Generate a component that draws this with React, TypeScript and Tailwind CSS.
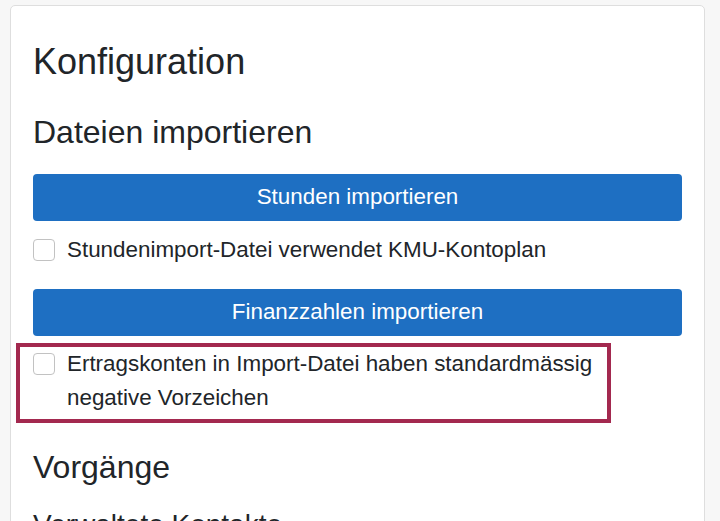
import React from 'react';

const CheckRow: React.FC<{ label: string }> = ({ label }) => (
  <label className="flex items-start gap-3 text-[22.4px] leading-[34px] text-[#212529]">
    <span className="mt-[6px] h-[22px] w-[22px] shrink-0 rounded-[4px] border border-[#c2c2c2] bg-white"></span>
    <span>{label}</span>
  </label>
);

const ImportButton: React.FC<{ label: string; className?: string }> = ({ label, className = '' }) => (
  <button
    type="button"
    className={`h-[47px] w-full rounded-[4px] bg-[#1e6fc2] text-[22.4px] text-white ${className}`}
  >
    {label}
  </button>
);

const App: React.FC = () => {
  return (
    <div
      className="h-[521px] overflow-hidden bg-[#f7f7f7] pl-[10px] pt-[5px]"
      style={{ fontFamily: '"Liberation Sans", Arial, sans-serif' }}
    >
      <div className="h-[600px] w-[695px] rounded-[5px] border border-[#dedede] bg-white px-[22px] pt-[34px]">
        <h1 className="text-[36px] font-normal leading-[1.2] text-[#212529]">Konfiguration</h1>
        <h2 className="mt-[30px] text-[32px] font-normal leading-[1.2] text-[#212529]">Dateien importieren</h2>

        <ImportButton label="Stunden importieren" className="mt-[22px]" />
        <div className="mt-[12px]">
          <CheckRow label="Stundenimport-Datei verwendet KMU-Kontoplan" />
        </div>

        <ImportButton label="Finanzzahlen importieren" className="mt-[22px]" />
        <div className="-ml-[17px] mt-[7px] w-[595px] border-4 border-[#a3294f] pb-[4px] pl-[13px] pr-[10px]">
          <CheckRow label="Ertragskonten in Import-Datei haben standardmässig negative Vorzeichen" />
        </div>

        <h2 className="mt-[25px] text-[32px] font-normal leading-[1.2] text-[#212529]">Vorgänge</h2>
        <h3 className="mt-[22px] text-[28px] font-normal leading-[1.2] text-[#212529]">Verwaltete Kontakte</h3>
      </div>
    </div>
  );
};

export default App;
